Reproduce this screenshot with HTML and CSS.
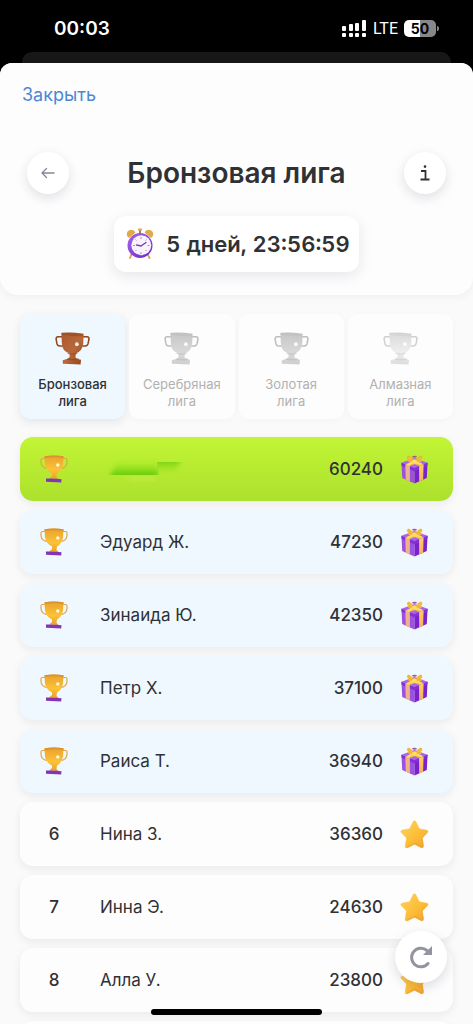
FILE: index.html
```html
<!DOCTYPE html>
<html lang="ru">
<head>
<meta charset="utf-8">
<meta name="viewport" content="width=device-width, initial-scale=1">
<title>Бронзовая лига</title>
<link rel="stylesheet" href="styles.css">
</head>
<body>
<svg class="sprite" aria-hidden="true">
  <defs>
    <linearGradient id="bronze-fill" x1="0" y1="0" x2="1" y2="1"><stop offset="0" stop-color="#a9592c"/><stop offset=".55" stop-color="#b8683b"/><stop offset="1" stop-color="#8d4217"/></linearGradient>
    <linearGradient id="silver-fill" x1="0" y1="0" x2="0" y2="1"><stop offset="0" stop-color="#c6c6c6"/><stop offset=".6" stop-color="#d8d8d8"/><stop offset="1" stop-color="#cfcfcf"/></linearGradient>
    <linearGradient id="diamond-fill" x1="0" y1="0" x2="0" y2="1"><stop offset="0" stop-color="#d9d9d9"/><stop offset=".6" stop-color="#eeeeee"/><stop offset="1" stop-color="#dcdcdc"/></linearGradient>
    <linearGradient id="gold-fill" x1="0" y1="0" x2="0" y2="1"><stop offset="0" stop-color="#e9a12c"/><stop offset=".6" stop-color="#fcc236"/><stop offset="1" stop-color="#e9a02d"/></linearGradient>
    <linearGradient id="star-fill" x1="0" y1="0" x2="1" y2="1"><stop offset="0" stop-color="#ffd45e"/><stop offset=".55" stop-color="#fdbd37"/><stop offset="1" stop-color="#f0a32d"/></linearGradient>
    <linearGradient id="clock-fill" x1="0" y1="0" x2="1" y2="1"><stop offset="0" stop-color="#a667ee"/><stop offset="1" stop-color="#6c25c4"/></linearGradient>
    <linearGradient id="ribbon-fill" x1="0" y1="0" x2="0" y2="1"><stop offset="0" stop-color="#ffd05c"/><stop offset="1" stop-color="#eeb066"/></linearGradient>
    <linearGradient id="smudge-left" x1="0" y1="0" x2="0" y2="1"><stop offset="0" stop-color="#b4f02e" stop-opacity="0"/><stop offset=".5" stop-color="#8fe11d"/><stop offset="1" stop-color="#55bd05"/></linearGradient>
    <linearGradient id="smudge-right" x1="0" y1="0" x2="0" y2="1"><stop offset="0" stop-color="#65c908"/><stop offset="1" stop-color="#a9e62a" stop-opacity="0"/></linearGradient>
    <filter id="soft"><feGaussianBlur stdDeviation="2"/></filter>
    <clipPath id="smudge-cut"><path d="M0 0h90v10H59v13H0Z"/></clipPath>
    <clipPath id="smudge-cut-right"><path d="M57 10h33v24H57Z"/></clipPath>
  </defs>
  <symbol id="league-cup" viewBox="0 0 36 36">
    <g fill="none" stroke="currentColor" stroke-width="1.600" stroke-linejoin="round">
      <path d="M8 6H3Q.9 6 1.200 8.500L2 13Q2.600 15.500 5 15.400H8"/><path d="M28 6h5q2.300 0 1.900 2.500L34 13q-.6 2.400-3 2.400h-3"/>
    </g>
    <path d="M6.500 1.800Q18 1.200 29.500 2.800L29 13Q28 21 21.500 22.800L21 27q1 1.600 3 2l2.800.5-.5 5L8 33.800V30l5-1.400q1.800-.8 2-2v-3.800Q7.200 21 7 12Z" fill="var(--cup)"/>
    <path d="M7 2.200Q18 1 29 3L28.600 5.400Q18 5.500 7 3.800Z" fill="currentColor" opacity=".55"/>
    <path d="M13 22.800q5 2 10 0M12.500 28.800q6 1.600 12 0" fill="none" stroke="currentColor" stroke-width="1.400" opacity=".65"/>
    <circle cx="22.500" cy="13.500" r="1.900" fill="#fff" opacity=".9"/>
  </symbol>
  <symbol id="prize-cup" viewBox="0 0 28 28">
    <path d="M6 3.500H2.500Q.8 3.500 1 5.500v2q.4 4.500 4.500 5.600H7M22 3.500h3.500Q27.200 3.500 27 5.500v2q-.4 4.500-4.500 5.600H21" fill="none" stroke="#dfa64a" stroke-width="1.200"/>
    <path d="M4.500 1.200Q14-.3 23.500 1.200L23 9.500Q22 15.500 17 18.500L16.500 22l2 2-9.500-.5 3-2.600V18.500Q6 15.500 5 9.500Z" fill="url(#gold-fill)"/>
    <path d="M4.500 1.200Q14-.3 23.500 1.200V3Q14 1.600 4.700 3Z" fill="#d89332"/>
    <path d="M6 23.600q8-.6 15.500.6l-.3 3.300-15.200-.8Z" fill="#8435b6"/>
    <circle cx="17.800" cy="10" r="1.700" fill="#fff8db"/>
  </symbol>
  <symbol id="gift" viewBox="0 0 28 30">
    <path d="M.5 8L14 3l13.500 5L14 13.500Z" fill="#a865e6"/>
    <path d="M.5 8L14 13.500V29.500L1.300 23.800Z" fill="#9c52e0"/><path d="M14 13.500L27.500 8l-.8 15.800L14 29.500Z" fill="#7c1fcd"/>
    <path d="M.5 8L14 13.500V17L.6 11.200ZM27.500 8L14 13.500V17l13.300-5.800Z" fill="#8530d3"/>
    <path d="M4.500 9.600l4.700 1.900v15.900l-4.200-1.900Z" fill="#eeb38b"/><path d="M18.800 11.500l4.600-1.900-.5 15.900-4.100 1.900Z" fill="url(#ribbon-fill)"/>
    <path d="M4.500 9.600L18.300 4.500l4.200 1.600L9.200 11.500ZM6 6l4-1.500 13.400 5.100-4.600 1.900Z" fill="#f3b851"/>
    <path d="M14 7.500Q5 5 7 1.500 9-.5 14 7.500ZM14 7.500Q23 5 21.500 1.500 19-.5 14 7.500Z" fill="#f7bc31" stroke="#e8a129" stroke-width=".6"/>
    <path d="M13 7L7.500 10M15 7.500l5.500 1.800" stroke="#ffdc5c" stroke-width="2.400" stroke-linecap="round"/>
    <circle cx="14" cy="6.800" r="2.300" fill="#ffdd66"/>
    <ellipse cx="14" cy="1.800" rx="2.500" ry="1.100" fill="#a45d8e"/>
  </symbol>
  <symbol id="star" viewBox="0 0 28 28">
    <path d="M12.800 1.500Q14 0 15.200 1.500L18.600 8.500 26 9.800Q28 10.600 26.700 12L21.600 17.300 22.800 25.200Q22.600 27.600 20.500 26.700L14 23.400 6.800 26.800Q4.700 27.300 5 25.200L6.300 17.300 1.200 12Q0 10.400 2 9.800L9.400 8.500Z" fill="url(#star-fill)" stroke="#fdbd42" stroke-width=".5" stroke-linejoin="round"/>
    <path d="M20.500 17.300l1.200 8.200-7.200-3.800-7 3.500-1.600 1.400q.8.600 2 .1L14 23.600l6.500 3.100q2.100.8 2.300-1.500l-1.200-7.900 5-5.300Z" fill="#ed9c32" opacity=".55"/>
  </symbol>
</svg>

<div class="screen">
  <header class="status">
    <time class="status-time">00:03</time>
    <div class="status-icons">
      <svg class="signal" viewBox="0 0 26 17" aria-label="Сигнал"><g fill="#fff"><rect x="1" y="6" width="4" height="5" rx="1"/><rect x="8" y="4" width="4" height="7" rx="1"/><rect x="14" y="3" width="4" height="8" rx="1"/><rect x="21" y="0" width="4" height="11" rx="1"/><rect x="1" y="13" width="4" height="4" rx="1"/><rect x="8" y="13" width="4" height="4" rx="1"/><rect x="14" y="13" width="4" height="4" rx="1"/><rect x="21" y="13" width="4" height="4" rx="1"/></g></svg>
      <span class="network">LTE</span>
      <span class="battery">50</span>
    </div>
  </header>
  <div class="backsheet"></div>

  <main class="sheet">
    <section class="hero">
      <button class="close" type="button">Закрыть</button>
      <div class="title-row">
        <button class="round" type="button" aria-label="Назад"><svg width="14" height="12" viewBox="0 0 14 12" fill="none" stroke="#858792" stroke-width="1.300" stroke-linecap="round" stroke-linejoin="round"><path d="M13 6H1M5.500 1.500L1 6l4.500 4.500"/></svg></button>
        <h1 class="title">Бронзовая лига</h1>
        <button class="round info" type="button" aria-label="Информация"><svg width="12" height="16" viewBox="0 0 12 16" fill="none" stroke="#303134" stroke-width="1.800"><path d="M2 6h4.500v8M1.500 14.500h9"/><circle cx="6" cy="1.600" r="1.300" fill="#303134" stroke="none"/></svg></button>
      </div>
      <div class="timer">
        <svg width="28" height="32" viewBox="0 0 28 32" aria-hidden="true">
          <path d="M6 25l-2 5M21 25l2.500 5" stroke="#d9a04b" stroke-width="1.800" stroke-linecap="round"/>
          <path d="M1 8Q0 3 4 2q4-1 5.500 2.500L3 10ZM27 8q1-5-3-6-4-1-5.500 2.500L25 10Z" fill="#e0ab45"/>
          <path d="M14 1v5" stroke="#a17a62" stroke-width="2"/><path d="M12 1.500h4" stroke="#e1ad54" stroke-width="2"/>
          <circle cx="14" cy="17.500" r="12.500" fill="url(#clock-fill)"/><circle cx="15.300" cy="17.300" r="10" fill="#f8f3ff"/>
          <path d="M15 9v2M15 24v2M7 17.500h2M21.500 17.500h2M9.500 11.500l1 1M20.500 11.500l-1 1M9.500 23l1-1M20.500 23l-1-1" stroke="#ad8cc7"/>
          <path d="M10.500 17l4.500 1 5-3.500" fill="none" stroke="#7640b4" stroke-width="1.400" stroke-linecap="round"/>
        </svg>
        <span class="timer-text">5 дней, 23:56:59</span>
      </div>
    </section>

    <nav class="leagues" aria-label="Лиги">
      <button class="league active" type="button"><svg class="cup bronze"><use href="#league-cup"/></svg><span>Бронзовая<br>лига</span></button>
      <button class="league" type="button"><svg class="cup silver"><use href="#league-cup"/></svg><span>Серебряная<br>лига</span></button>
      <button class="league" type="button"><svg class="cup silver"><use href="#league-cup"/></svg><span>Золотая<br>лига</span></button>
      <button class="league" type="button"><svg class="cup diamond"><use href="#league-cup"/></svg><span>Алмазная<br>лига</span></button>
    </nav>

    <ol class="ranking">
      <li class="row me"><svg class="place"><use href="#prize-cup"/></svg><span class="name"><svg class="smudge" viewBox="0 0 90 34" aria-label="Имя скрыто"><g clip-path="url(#smudge-cut)"><path d="M9 27L18 7h40v20Z" fill="url(#smudge-left)" filter="url(#soft)"/></g><g clip-path="url(#smudge-cut-right)"><path d="M55 6h27l-9 18H55Z" fill="url(#smudge-right)" filter="url(#soft)"/></g><path d="M24 25h32v4H32Z" fill="#cfea55" opacity=".6" filter="url(#soft)"/></svg></span><span class="score">60240</span><svg class="reward"><use href="#gift"/></svg></li>
      <li class="row prize"><svg class="place"><use href="#prize-cup"/></svg><span class="name">Эдуард Ж.</span><span class="score">47230</span><svg class="reward"><use href="#gift"/></svg></li>
      <li class="row prize"><svg class="place"><use href="#prize-cup"/></svg><span class="name">Зинаида Ю.</span><span class="score">42350</span><svg class="reward"><use href="#gift"/></svg></li>
      <li class="row prize"><svg class="place"><use href="#prize-cup"/></svg><span class="name">Петр Х.</span><span class="score">37100</span><svg class="reward"><use href="#gift"/></svg></li>
      <li class="row prize"><svg class="place"><use href="#prize-cup"/></svg><span class="name">Раиса Т.</span><span class="score">36940</span><svg class="reward"><use href="#gift"/></svg></li>
      <li class="row"><span class="place">6</span><span class="name">Нина З.</span><span class="score">36360</span><svg class="reward"><use href="#star"/></svg></li>
      <li class="row"><span class="place">7</span><span class="name">Инна Э.</span><span class="score">24630</span><svg class="reward"><use href="#star"/></svg></li>
      <li class="row"><span class="place">8</span><span class="name">Алла У.</span><span class="score">23800</span><svg class="reward"><use href="#star"/></svg></li>
      <li class="row" aria-hidden="true"></li>
    </ol>
  </main>
  <button class="refresh" type="button" aria-label="Обновить"><svg width="24" height="24" viewBox="0 0 24 24" fill="none" stroke="#92949e" stroke-width="3"><path d="M19 18.500A9.300 9.300 0 1 1 18 5.500" stroke-linecap="round"/><path d="M23 1v9h-9Z" fill="#92949e" stroke="none"/></svg></button>
  <div class="home-bar"></div>
</div>
</body>
</html>
```
FILE: styles.css
```css
* { box-sizing: border-box; }
body { margin: 0; background: #000; color: #303134; font-family: Inter, "Noto Sans", sans-serif; }
button { border: 0; padding: 0; font: inherit; color: inherit; cursor: pointer; }
.sprite { position: absolute; width: 0; height: 0; }
.screen { height: 100vh; display: flex; flex-direction: column; overflow: hidden; }

.status { flex: none; height: 52px; padding: 5px 37px 0 54px; display: flex; align-items: center; justify-content: space-between; color: #fff; }
.status-time { font-size: 19px; font-weight: 600; }
.status-icons { display: flex; align-items: center; gap: 6px; }
.signal { width: 26px; height: 17px; }
.network { font-family: Roboto, Inter, sans-serif; font-size: 16px; font-weight: 400; }
.battery { position: relative; width: 32px; height: 17px; border-radius: 5px; background: linear-gradient(90deg, #fff 50%, #87878a 50%); color: #000; font-size: 14px; line-height: 17px; font-weight: 700; text-align: center; }
.battery::after { content: ""; position: absolute; right: -3px; top: 6px; width: 2px; height: 5px; border-radius: 0 2px 2px 0; background: #87878a; }
.backsheet { flex: none; height: 11px; margin: 0 22px; border-radius: 10px 10px 0 0; background: #171717; }

.sheet { flex: 1; min-height: 0; overflow: hidden; border-radius: 12px 12px 0 0; background: #fafafa; }
.hero { padding: 20px 27px 23px; display: flex; flex-direction: column; border-radius: 0 0 18px 18px; background: #fdfdfe; box-shadow: 0 2px 10px rgba(0, 0, 0, .05); }
.close { align-self: flex-start; margin-left: -5px; background: none; color: #4a88d8; font-size: 18px; line-height: 24px; }
.title-row { margin-top: 45px; display: flex; align-items: center; justify-content: space-between; }
.title { margin: 0; font-size: 28px; line-height: 32px; font-weight: 600; }
.round { width: 42px; height: 42px; border-radius: 50%; display: grid; place-items: center; background: #fff; box-shadow: 0 4px 12px rgba(30, 30, 50, .13); }
.timer { align-self: center; margin-top: 22px; height: 56px; padding: 0 9px 0 12px; display: flex; align-items: center; gap: 12px; border-radius: 12px; background: #fff; box-shadow: 0 4px 14px rgba(30, 30, 50, .1); }
.timer-text { font-size: 22px; line-height: 26px; font-weight: 600; font-variant-numeric: tabular-nums; }

.leagues { padding: 19px 20px 0; display: grid; grid-template-columns: repeat(4, 1fr); gap: 4px; }
.league { height: 105px; padding-top: 17px; display: flex; flex-direction: column; align-items: center; gap: 10px; border-radius: 10px; background: #fdfdfd; color: #b1b1b1; font-size: 13px; line-height: 17px; box-shadow: 0 2px 8px rgba(0, 0, 0, .025); }
.league.active { background: #eff8ff; color: #303134; font-weight: 500; box-shadow: 0 3px 10px rgba(20, 50, 80, .1); }
.cup { width: 35px; height: 35px; }
.bronze { --cup: url(#bronze-fill); color: #8e4721; }
.silver { --cup: url(#silver-fill); color: #bebebe; }
.diamond { --cup: url(#diamond-fill); color: #d0d0d0; }

.ranking { list-style: none; margin: 0; padding: 18px 20px 0; display: grid; gap: 9px; }
.row { height: 64px; padding: 0 24px 0 20px; display: flex; align-items: center; border-radius: 13px; background: #fdfdfe; font-size: 17px; font-weight: 500; box-shadow: 0 3px 8px rgba(20, 30, 50, .07); }
.prize { background: #eff8ff; }
.me { background: linear-gradient(#c2f535, #ace12d); }
.place { width: 28px; height: 28px; text-align: center; line-height: 28px; }
.name { flex: 1; display: flex; padding-left: 32px; font-weight: 400; }
.smudge { width: 90px; height: 34px; }
.score { padding-right: 17px; }
.reward { width: 29px; height: 29px; }

.refresh { position: fixed; right: 26px; bottom: 41px; width: 52px; height: 52px; border-radius: 50%; display: grid; place-items: center; background: #fff; box-shadow: 0 4px 12px rgba(30, 30, 50, .15); }
.home-bar { position: fixed; bottom: 9px; left: 32%; right: 32%; height: 6px; border-radius: 3px; background: #000; }
```
